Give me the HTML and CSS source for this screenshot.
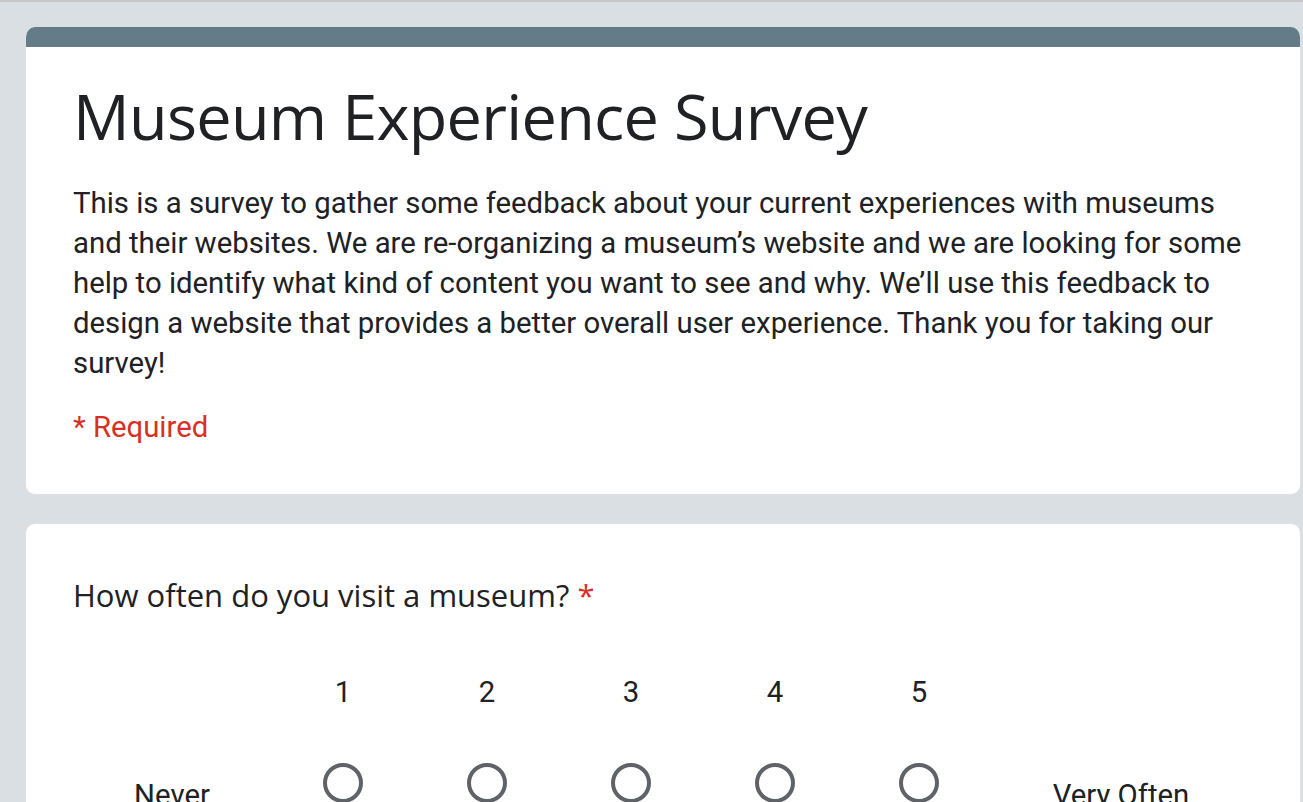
FILE: index.html
```html
<!DOCTYPE html>
<html>
<head>
<meta charset="utf-8">
<link rel="stylesheet" href="styles.css">
</head>
<body>
<div class="topline"></div>
<main class="page">
  <section class="card header-card">
    <div class="card-bar"></div>
    <div class="card-body">
      <h1 class="title">Museum Experience Survey</h1>
      <p class="desc">This is a survey to gather some feedback about your current experiences with museums and their websites. We are re-organizing a museum’s website and we are looking for some help to identify what kind of content you want to see and why. We’ll use this feedback to design a website that provides a better overall user experience. Thank you for taking our survey!</p>
      <p class="required">* Required</p>
    </div>
  </section>
  <section class="card question-card">
    <div class="q-body">
      <h2 class="question">How often do you visit a museum? <span class="star">*</span></h2>
      <div class="scale">
        <div class="scale-label">Never</div>
        <div class="scale-col"><span class="num">1</span><span class="radio"></span></div>
        <div class="scale-col"><span class="num">2</span><span class="radio"></span></div>
        <div class="scale-col"><span class="num">3</span><span class="radio"></span></div>
        <div class="scale-col"><span class="num">4</span><span class="radio"></span></div>
        <div class="scale-col"><span class="num">5</span><span class="radio"></span></div>
        <div class="scale-label end">Very Often</div>
      </div>
    </div>
  </section>
</main>
</body>
</html>
```

FILE: styles.css
```css
html, body {
  margin: 0;
  padding: 0;
  background: #d9dfe2;
  overflow: hidden;
  height: 802px;
}
.topline {
  height: 2px;
  background: #c7c7c7;
}
.page {
  padding: 25px 0 0 25px;
  display: flex;
  flex-direction: column;
  gap: 28px;
}
.card {
  width: 1276px;
  box-sizing: border-box;
  background: #fff;
  border: 1px solid #dde1e4;
  border-radius: 10px;
  overflow: hidden;
}
.header-card {
  border-top: none;
}
.card-bar {
  height: 20px;
  background: #647c87;
  margin: 0 -1px;
}
.card-body {
  padding: 30px 47px 47px;
}
.title {
  margin: 0;
  font-family: "Open Sans", "Roboto", sans-serif;
  font-weight: 400;
  font-size: 63px;
  line-height: 77px;
  color: #202124;
  letter-spacing: -0.7px;
}
.desc {
  margin: 29px 0 0;
  font-family: "Roboto", sans-serif;
  font-size: 22pt;
  line-height: 40px;
  color: #202124;
}
.required {
  margin: 24px 0 0;
  font-family: "Roboto", sans-serif;
  font-size: 22pt;
  line-height: 40px;
  color: #d93025;
}
.q-body {
  padding: 47px 47px 0;
  height: 300px;
}
.question {
  margin: 0;
  font-family: "Open Sans", "Roboto", sans-serif;
  font-weight: 400;
  font-size: 31px;
  line-height: 48px;
  color: #202124;
}
.star {
  color: #d93025;
}
.scale {
  display: flex;
  margin-top: 57px;
}
.scale-label {
  width: 198px;
  padding-top: 103px;
  text-align: center;
  font-family: "Roboto", sans-serif;
  font-size: 22pt;
  line-height: 32px;
  color: #202124;
}
.scale-label.end {
  width: 260px;
}
.scale-col {
  width: 144px;
  display: flex;
  flex-direction: column;
  align-items: center;
  gap: 55px;
}
.num {
  font-family: "Roboto", sans-serif;
  font-size: 22pt;
  line-height: 32px;
  color: #202124;
}
.radio {
  width: 40px;
  height: 40px;
  box-sizing: border-box;
  border: 4px solid #5f6368;
  border-radius: 50%;
}
```
